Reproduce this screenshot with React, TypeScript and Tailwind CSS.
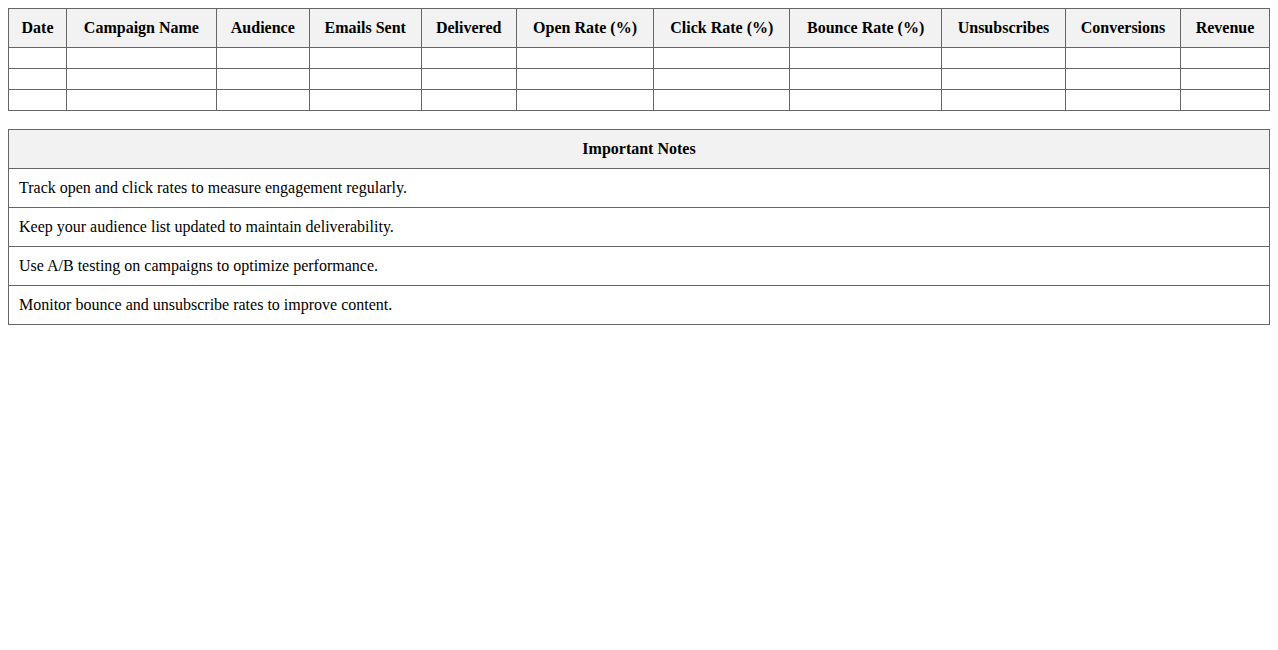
export default function App() {
  const cols: [string, string][] = [
    ["Date", "w-[58px]"],
    ["Campaign Name", "w-[150px]"],
    ["Audience", "w-[93px]"],
    ["Emails Sent", "w-[112px]"],
    ["Delivered", "w-[95px]"],
    ["Open Rate (%)", "w-[138px]"],
    ["Click Rate (%)", "w-[136px]"],
    ["Bounce Rate (%)", "w-[152px]"],
    ["Unsubscribes", "w-[124px]"],
    ["Conversions", "w-[115px]"],
    ["Revenue", "w-[89px]"],
  ];
  const notes = [
    "Track open and click rates to measure engagement regularly.",
    "Keep your audience list updated to maintain deliverability.",
    "Use A/B testing on campaigns to optimize performance.",
    "Monitor bounce and unsubscribe rates to improve content.",
  ];
  return (
    <div className="p-2 bg-white text-black text-[16px] leading-[18px]" style={{ fontFamily: '"Liberation Serif", serif' }}>
      <table className="w-full border-collapse">
        <thead>
          <tr>
            {cols.map(([c, w]) => (
              <th key={c} className={`${w} border border-[#666] bg-[#f2f2f2] p-[10px] font-bold text-center`}>{c}</th>
            ))}
          </tr>
        </thead>
        <tbody>
          {[0, 1, 2].map((r) => (
            <tr key={r}>
              {cols.map(([c]) => (
                <td key={c} className="border border-[#666] p-[10px] h-[21px]"></td>
              ))}
            </tr>
          ))}
        </tbody>
      </table>
      <table className="w-full border-collapse mt-[18px]">
        <thead>
          <tr>
            <th className="border border-[#666] bg-[#f2f2f2] p-[10px] font-bold text-center">Important Notes</th>
          </tr>
        </thead>
        <tbody>
          {notes.map((n) => (
            <tr key={n}>
              <td className="border border-[#666] p-[10px] text-left">{n}</td>
            </tr>
          ))}
        </tbody>
      </table>
    </div>
  );
}
